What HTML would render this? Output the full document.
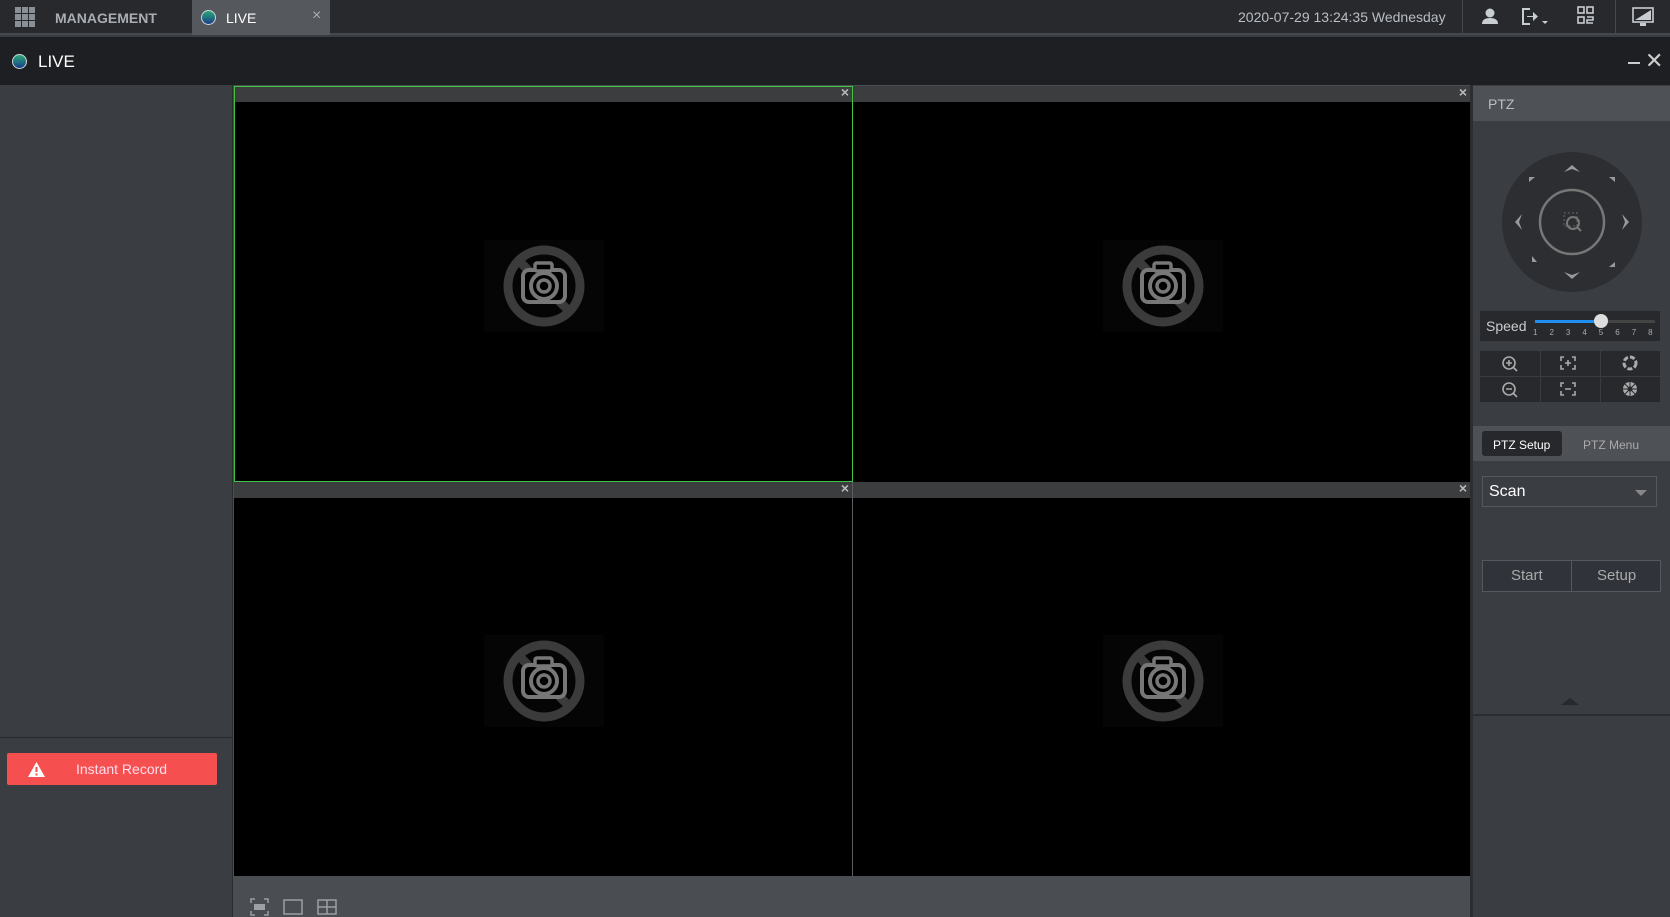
<!DOCTYPE html>
<html><head><meta charset="utf-8"><style>
*{margin:0;padding:0;box-sizing:border-box}
body{width:1670px;height:917px;background:#3a3d41;font-family:"Liberation Sans",sans-serif;position:relative;overflow:hidden}
.a{position:absolute}
.dot{width:15px;height:15px;border-radius:50%;background:linear-gradient(#2aa876,#1a3f8a);border:1.5px solid #cfd6dc}
.cell{position:absolute;background:#000}
.cell .h{position:absolute;left:0;right:0;top:0;height:16px;background:#3c3d3f}
.cell .x{position:absolute;right:3px;top:-2px;color:#bbb;font-size:14px;font-weight:bold}
.cam{position:absolute;width:120px;height:92px;background:#050505}
</style></head><body>
<div class="a" style="left:0;top:0;width:1670px;height:35px;background:#27292d;border-bottom:2px solid #45484c"></div>
<div class="a" style="left:15px;top:7px;width:21px;height:20px;display:grid;grid-template-columns:repeat(3,6px);gap:1px">
<i style="background:#8a8f96"></i><i style="background:#8a8f96"></i><i style="background:#8a8f96"></i><i style="background:#8a8f96"></i><i style="background:#8a8f96"></i><i style="background:#8a8f96"></i><i style="background:#8a8f96"></i><i style="background:#8a8f96"></i><i style="background:#8a8f96"></i></div>
<div class="a" style="left:55px;top:10px;color:#a9adb3;font-weight:bold;font-size:14px">MANAGEMENT</div>
<div class="a" style="left:192px;top:0;width:138px;height:35px;background:#55585c"></div>
<div class="a dot" style="left:201px;top:10px"></div>
<div class="a" style="left:226px;top:10px;color:#fff;font-size:14px">LIVE</div>
<div class="a" style="left:312px;top:7px;color:#aaa;font-size:16px">×</div>
<div class="a" style="left:1238px;top:9px;color:#b9bec4;font-size:14px">2020-07-29 13:24:35 Wednesday</div>
<div class="a" style="left:1462px;top:0;width:1px;height:35px;background:#45484c"></div>
<div class="a" style="left:1615px;top:0;width:1px;height:35px;background:#45484c"></div>
<svg class="a" style="left:1480px;top:7px" width="20" height="20"><circle cx="10" cy="6" r="4.5" fill="#c8cdd2"/><path d="M2 17Q2 11 10 11Q18 11 18 17Z" fill="#c8cdd2"/></svg>
<svg class="a" style="left:1520px;top:6px" width="30" height="22"><path d="M10 3H3V18H10" stroke="#c8cdd2" stroke-width="2" fill="none"/><path d="M7 10H13V6L18 10.5L13 15V11H7Z" fill="#c8cdd2"/><path d="M22 15h6l-3 3z" fill="#c8cdd2"/></svg>
<svg class="a" style="left:1577px;top:6px" width="18" height="20" fill="none" stroke="#c8cdd2" stroke-width="1.6"><rect x="1" y="1" width="6" height="6"/><rect x="10" y="1" width="6" height="6"/><rect x="1" y="11" width="6" height="6"/><path d="M10 11h6v3h-6v3h6"/></svg>
<svg class="a" style="left:1632px;top:6px" width="24" height="22"><rect x="1" y="2" width="20" height="14" fill="none" stroke="#c8cdd2" stroke-width="1.6"/><path d="M3 14L19 4V14Z" fill="#c8cdd2"/><rect x="8" y="17" width="6" height="3" fill="#c8cdd2"/></svg>
<div class="a" style="left:0;top:37px;width:1670px;height:48px;background:#1e1f22"></div>
<div class="a dot" style="left:12px;top:54px"></div>
<div class="a" style="left:38px;top:52px;color:#fff;font-size:17px">LIVE</div>
<div class="a" style="left:1628px;top:62px;width:12px;height:2px;background:#ccc"></div>
<div class="a" style="left:1645px;top:48px;color:#ccc;font-size:22px">✕</div>
<div class="a" style="left:0;top:85px;width:233px;height:832px;background:#3a3d41;border-right:1px solid #2a2c2f"></div>
<div class="a" style="left:0;top:737px;width:233px;height:1px;background:#27292c"></div>
<div class="a" style="left:7px;top:753px;width:210px;height:32px;background:#f54f4f;border-radius:2px"></div>
<svg class="a" style="left:27px;top:761px" width="19" height="17"><path d="M9.5 1L18 16H1Z" fill="#fff"/><rect x="8.5" y="6" width="2" height="5" fill="#f54f4f"/><rect x="8.5" y="12.5" width="2" height="2" fill="#f54f4f"/></svg>
<div class="a" style="left:76px;top:761px;color:#fde;font-size:14px">Instant Record</div>
<div class="a" style="left:233px;top:85px;width:1237px;height:832px;background:#4a4d51"></div>
<div class="cell" style="left:234px;top:86px;width:618px;height:396px"><div class="h"></div><span class="x">×</span></div>
<div class="cell" style="left:853px;top:86px;width:617px;height:396px"><div class="h"></div><span class="x">×</span></div>
<div class="cell" style="left:234px;top:482px;width:618px;height:394px"><div class="h"></div><span class="x">×</span></div>
<div class="cell" style="left:853px;top:482px;width:617px;height:394px"><div class="h"></div><span class="x">×</span></div>
<div class="a" style="left:852px;top:86px;width:1px;height:790px;background:#5a5d61"></div>
<div class="a" style="left:234px;top:86px;width:619px;height:396px;border:1.5px solid #3ec43e"></div>
<svg width="0" height="0" style="position:absolute"><defs><g id="ci"><circle cx="60" cy="46" r="36" fill="none" stroke="#3b3b3b" stroke-width="9"/><path d="M36 22L84 70" stroke="#3b3b3b" stroke-width="9"/><rect x="39" y="30" width="42" height="32" rx="6" fill="#000" stroke="#777" stroke-width="4"/><rect x="51" y="23" width="17" height="8" rx="2" fill="#000" stroke="#777" stroke-width="3.5"/><circle cx="60" cy="46" r="13" fill="#000" stroke="#777" stroke-width="4"/><circle cx="60" cy="46" r="6" fill="none" stroke="#777" stroke-width="3.5"/></g></defs></svg>
<svg class="a cam" style="left:484px;top:240px" width="120" height="92"><use href="#ci"/></svg>
<svg class="a cam" style="left:1103px;top:240px" width="120" height="92"><use href="#ci"/></svg>
<svg class="a cam" style="left:484px;top:635px" width="120" height="92"><use href="#ci"/></svg>
<svg class="a cam" style="left:1103px;top:635px" width="120" height="92"><use href="#ci"/></svg>
<svg class="a" style="left:250px;top:898px" width="100" height="18" fill="none" stroke="#9aa0a6" stroke-width="1.5"><path d="M1 5V1H5M14 1H18V5M18 13V17H14M5 17H1V13"/><rect x="4" y="6" width="11" height="6" fill="#9aa0a6" stroke="none"/><rect x="34" y="2" width="18" height="14"/><rect x="68" y="2" width="18" height="14"/><path d="M77 2V16M68 9H86"/></svg>
<div class="a" style="left:1470px;top:85px;width:200px;height:832px;background:#3a3d41;border-left:3px solid #2b2d30"></div>
<div class="a" style="left:1473px;top:86px;width:197px;height:35px;background:#4e5155"></div>
<div class="a" style="left:1488px;top:96px;color:#b9bec4;font-size:14px">PTZ</div>
<svg class="a" style="left:1500px;top:150px" width="144" height="144">
<circle cx="72" cy="72" r="70" fill="#2c2e31"/><circle cx="72" cy="72" r="32" fill="none" stroke="#777" stroke-width="2.5"/>
<rect x="64" y="63" width="13" height="13" fill="none" stroke="#666" stroke-dasharray="2 2"/><circle cx="73" cy="73" r="6" fill="none" stroke="#777" stroke-width="2"/><path d="M77 77l4 4" stroke="#777" stroke-width="2"/>
<g fill="#999"><path d="M64 22L72 15L80 22L72 19Z"/><path d="M64 122L72 129L80 122L72 125Z"/><path d="M22 64L15 72L22 80L19 72Z"/><path d="M122 64L129 72L122 80L125 72Z"/>
<path d="M29 32l6-5h-6z"/><path d="M115 32l-6-5h6z"/><path d="M32 112v-6l5 6z"/><path d="M115 117l-6 0l6-5z"/></g></svg>
<div class="a" style="left:1480px;top:311px;width:180px;height:30px;background:#27292c"></div>
<div class="a" style="left:1486px;top:318px;color:#ccc;font-size:14px">Speed</div>
<div class="a" style="left:1535px;top:320px;width:120px;height:3px;background:#444"></div>
<div class="a" style="left:1535px;top:320px;width:66px;height:3px;background:#1e8ef0"></div>
<div class="a" style="left:1594px;top:314px;width:14px;height:14px;border-radius:50%;background:#ddd"></div>
<div class="a" style="left:1533px;top:328px;color:#aaa;font-size:8px;letter-spacing:12px">12345678</div>
<div class="a" style="left:1480px;top:351px;width:180px;height:51px;background:#27292c"></div>
<div class="a" style="left:1540px;top:351px;width:1px;height:51px;background:#3a3c3f"></div>
<div class="a" style="left:1600px;top:351px;width:1px;height:51px;background:#3a3c3f"></div>
<div class="a" style="left:1480px;top:376px;width:180px;height:1px;background:#3a3c3f"></div>
<svg class="a" style="left:1480px;top:351px" width="180" height="51" fill="none" stroke="#aaa" stroke-width="1.6">
<circle cx="29" cy="12" r="6"/><path d="M33 16l4 4M26 12h6M29 9v6"/><circle cx="29" cy="38" r="6"/><path d="M33 42l4 4M26 38h6"/>
<path d="M84 6h-3v4M92 6h3v4M84 18h-3v-4M92 18h3v-4M85 12h6M88 9v6M84 32h-3v4M92 32h3v4M84 44h-3v-4M92 44h3v-4M85 38h6"/>
<circle cx="150" cy="12" r="6" stroke-width="3" stroke-dasharray="5 2"/><circle cx="150" cy="38" r="7" fill="#aaa" stroke="none"/><path d="M150 31v14M143 38h14M145 33l10 10M155 33l-10 10" stroke="#27292c" stroke-width="1"/><circle cx="150" cy="38" r="2.5" fill="#27292c" stroke="none"/></svg>
<div class="a" style="left:1473px;top:426px;width:197px;height:35px;background:#4e5155"></div>
<div class="a" style="left:1482px;top:431px;width:80px;height:25px;background:#26282b;border-radius:3px"></div>
<div class="a" style="left:1493px;top:438px;color:#fff;font-size:12px">PTZ Setup</div>
<div class="a" style="left:1583px;top:438px;color:#aaa;font-size:12px">PTZ Menu</div>
<div class="a" style="left:1482px;top:476px;width:175px;height:31px;border:1px solid #55585c;background:#3a3d41"></div>
<div class="a" style="left:1489px;top:483px;color:#fff;font-size:16px">Scan</div>
<div class="a" style="left:1635px;top:490px;border:6px solid transparent;border-top:6px solid #888"></div>
<div class="a" style="left:1482px;top:560px;width:179px;height:32px;border:1px solid #55585c;background:#30333a"></div>
<div class="a" style="left:1571px;top:560px;width:1px;height:32px;background:#55585c"></div>
<div class="a" style="left:1511px;top:567px;color:#aaa;font-size:15px">Start</div>
<div class="a" style="left:1597px;top:567px;color:#aaa;font-size:15px">Setup</div>
<div class="a" style="left:1561px;top:698px;border:9px solid transparent;border-bottom:7px solid #27292c;border-top:0"></div>
<div class="a" style="left:1473px;top:714px;width:197px;height:2px;background:#2b2d30"></div>
</body></html>
